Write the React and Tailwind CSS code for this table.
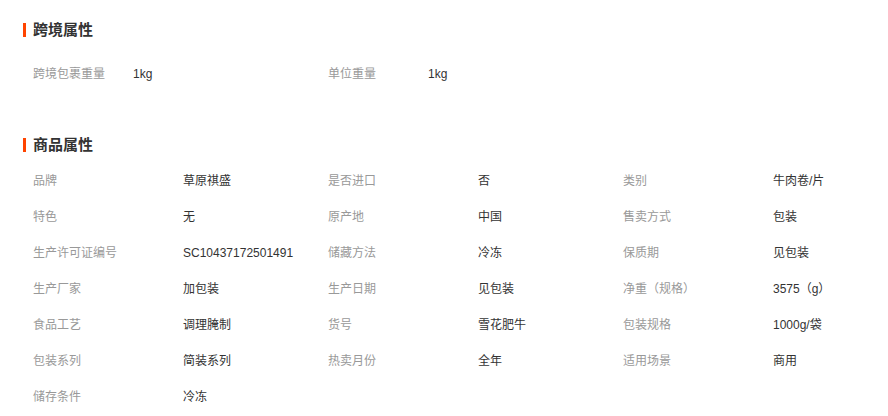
import React from "react";

const crossBorder = [
  ["跨境包裹重量", "1kg"],
  ["单位重量", "1kg"],
];

const attrs = [
  ["品牌", "草原祺盛"],
  ["是否进口", "否"],
  ["类别", "牛肉卷/片"],
  ["特色", "无"],
  ["原产地", "中国"],
  ["售卖方式", "包装"],
  ["生产许可证编号", "SC10437172501491"],
  ["储藏方法", "冷冻"],
  ["保质期", "见包装"],
  ["生产厂家", "加包装"],
  ["生产日期", "见包装"],
  ["净重（规格）", "3575（g）"],
  ["食品工艺", "调理腌制"],
  ["货号", "雪花肥牛"],
  ["包装规格", "1000g/袋"],
  ["包装系列", "简装系列"],
  ["热卖月份", "全年"],
  ["适用场景", "商用"],
  ["储存条件", "冷冻"],
];

function Title({ children }) {
  return (
    <div className="flex items-center h-[20px]">
      <span className="w-[3px] h-[14px] bg-[#ff4400] mr-[7px]"></span>
      <span className="text-[15px] font-bold text-[#333]">{children}</span>
    </div>
  );
}

function Item({ label, value, labelWidth }) {
  return (
    <div className="flex items-center h-[36px] w-[295px] text-[12px]">
      <span className="text-[#999] shrink-0" style={{ width: labelWidth }}>
        {label}
      </span>
      <span className="text-[#333]">{value}</span>
    </div>
  );
}

export default function App() {
  return (
    <div
      className="w-[888px] h-[416px] bg-white pl-[23px] overflow-hidden"
      style={{ fontFamily: '"Liberation Sans", "Noto Sans CJK SC", sans-serif' }}
    >
      <div className="pt-[20px]">
        <Title>跨境属性</Title>
      </div>
      <div className="flex pl-[10px] mt-[16px]">
        {crossBorder.map(([l, v]) => (
          <Item key={l} label={l} value={v} labelWidth={100} />
        ))}
      </div>
      <div className="mt-[43px]">
        <Title>商品属性</Title>
      </div>
      <div className="grid grid-cols-[295px_295px_295px] pl-[10px] mt-[8px]">
        {attrs.map(([l, v]) => (
          <Item key={l} label={l} value={v} labelWidth={150} />
        ))}
      </div>
    </div>
  );
}
